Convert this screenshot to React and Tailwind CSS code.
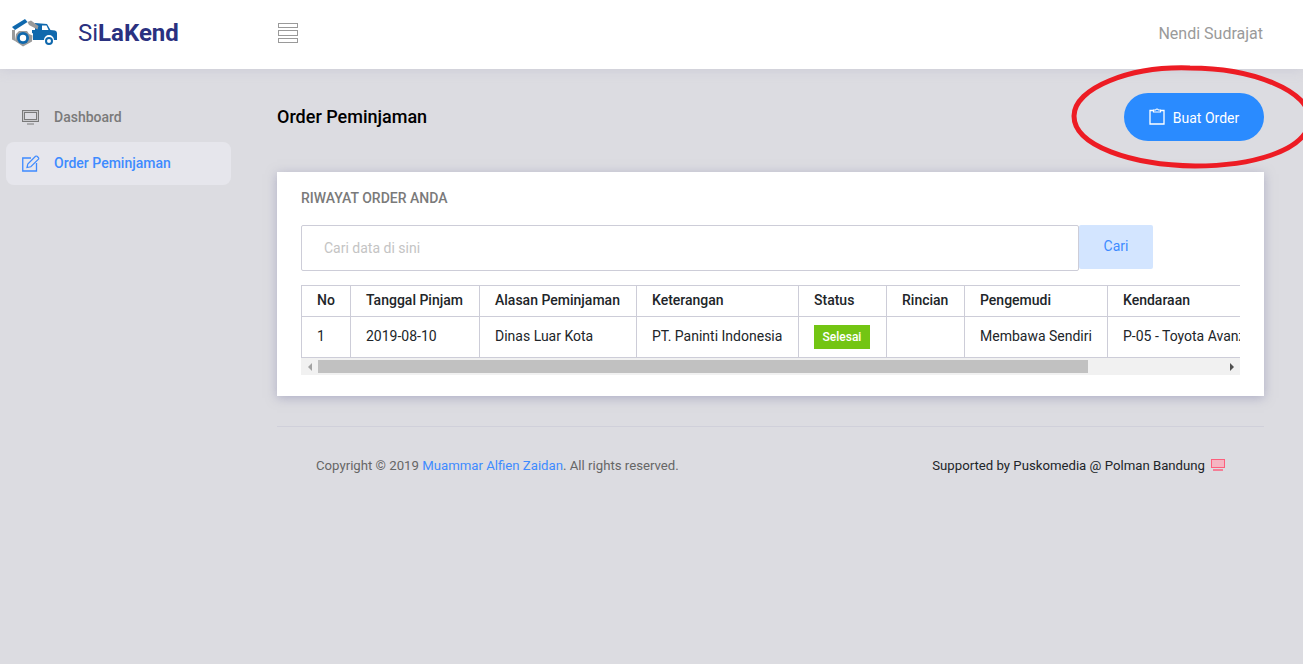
const columns = [
  { label: "No", width: "w-[49px]", value: "1" },
  { label: "Tanggal Pinjam", width: "w-[129px]", value: "2019-08-10" },
  { label: "Alasan Peminjaman", width: "w-[157px]", value: "Dinas Luar Kota" },
  { label: "Keterangan", width: "w-[162px]", value: "PT. Paninti Indonesia" },
  { label: "Status", width: "w-[88px]", badge: "Selesai" },
  { label: "Rincian", width: "w-[78px]", value: "" },
  { label: "Pengemudi", width: "w-[143px]", value: "Membawa Sendiri" },
  { label: "Kendaraan", width: "w-[180px]", value: "P-05 - Toyota Avanza" },
];

function Logo() {
  return (
    <svg width="46" height="28" viewBox="0 0 46 28" fill="none">
      {/* truck body */}
      <path d="M20 11 L23 11 L23 4 L35 5 L38.500 11 L43 11.500 Q45 12 45 14 L45 21 L42 21 A5 5 0 0 0 32 21 L20 21 Z" fill="#0f68ad" />
      <path d="M30 6.500 L34.500 6.500 L36.500 11 L30 11 Z" fill="#fff" />
      <circle cx="37" cy="22" r="3" fill="#fff" stroke="#0f68ad" strokeWidth="2" />
      {/* roof and wrench band */}
      <path d="M0 8 L13 0 L15.500 3 L3 11 Z" fill="#0f68ad" />
      <path d="M15.500 3 L19 1.500 L26.500 7 L25.500 10.500 L17 6 Z" fill="#9a9a9a" />
      {/* nut */}
      <path d="M11 9 L21 14.500 L21 23 L11 27.500 L3 23 L3 14 Z" fill="#fff" />
      <path d="M0 11 L3 11 L3 22 L0 20.500 Z" fill="#9a9a9a" />
      <path d="M3 22 L11 27.500 L20 22.500 L20.500 16.500 L17 15 L15 12 L7 12 L4 15 Z" fill="#9a9a9a" />
      <circle cx="11" cy="19" r="6" fill="#0f68ad" />
      <circle cx="11" cy="19" r="3.200" fill="#fff" />
    </svg>
  );
}

function MonitorIcon({ className }) {
  return (
    <svg width="18" height="15" viewBox="0 0 18 15" fill="none" className={className}>
      <rect x="0.500" y="0.500" width="16" height="11" fill="#8c8c8c" fillOpacity="0.25" stroke="currentColor" />
      <rect x="2.500" y="2.500" width="12" height="7" fill="#dcdce1" stroke="currentColor" />
      <path d="M5 14 H12" stroke="currentColor" />
    </svg>
  );
}

function EditIcon() {
  return (
    <svg width="18" height="17" viewBox="0 0 18 17" fill="none" className="text-[#3e8bff]">
      <path d="M9 3 H0.750 V16 H14.500 V8" stroke="currentColor" strokeWidth="1.300" />
      <path d="M5 12.500 L5.800 9 L13.500 1.300 Q14.300 0.700 15 1.300 L16.500 2.700 Q17 3.500 16.500 4.200 L8.800 11.800 Z" stroke="currentColor" strokeWidth="1.200" />
    </svg>
  );
}

function ClipboardIcon() {
  return (
    <svg width="16" height="17" viewBox="0 0 16 17" fill="none" className="text-white mb-[2px]">
      <path d="M4.500 2.500 H1 V16 H15 V2.500 H11.500" stroke="currentColor" strokeWidth="1.300" />
      <path d="M4.500 4 V2 H6.500 Q8 0 9.500 2 H11.500 V4 Z" stroke="currentColor" strokeWidth="1.200" />
    </svg>
  );
}

function ScreenIcon() {
  return (
    <svg width="15" height="13" viewBox="0 0 15 13" fill="none" className="text-[#fd5f7c] mb-[2px]">
      <rect x="0.500" y="0.500" width="13" height="8" fill="#f5b5c2" stroke="currentColor" />
      <path d="M2 11 H12" stroke="currentColor" strokeWidth="1.500" />
    </svg>
  );
}

function TableScrollbar() {
  return (
    <div className="flex h-[17px] bg-[#f1f1f1] items-center">
      <div className="w-[17px] flex justify-center">
        <div className="w-0 h-0 border-y-[4px] border-y-transparent border-r-[4px] border-r-[#a3a3a3]" />
      </div>
      <div className="w-[770px] h-[13px] bg-[#c1c1c1]" />
      <div className="flex-1" />
      <div className="w-[17px] flex justify-center">
        <div className="w-0 h-0 border-y-[4px] border-y-transparent border-l-[4px] border-l-[#505050]" />
      </div>
    </div>
  );
}

export default function App() {
  return (
    <div className="relative h-[664px] overflow-hidden bg-[#dcdce1] font-['Roboto',sans-serif] text-[14px] text-[#212529]">
      <header className="h-[69px] pb-[4px] bg-white flex items-center shadow-[0_2px_10px_rgba(180,180,200,0.35)] relative">
        <div className="w-[278px] flex items-center pl-[12px] shrink-0">
          <Logo />
          <span className="ml-[20px] text-[24px] text-[#2a3180] leading-none">
            Si<span className="font-bold">LaKend</span>
          </span>
        </div>
        <button className="flex flex-col gap-[2px]">
          <span className="block w-[20px] h-[5px] border border-[#9a9a9a]" />
          <span className="block w-[20px] h-[6px] border border-[#9a9a9a]" />
          <span className="block w-[20px] h-[5px] border border-[#9a9a9a]" />
        </button>
        <span className="ml-auto mr-[40px] mt-[2px] text-[16px] text-[#9a9a9a]">Nendi Sudrajat</span>
      </header>

      <div className="flex">
        <aside className="w-[277px] shrink-0 pt-[27px] pl-[6px]">
          <div className="w-[225px] h-[43px] flex items-center pl-[16px] gap-[14px] text-[#7a7a7a] font-medium">
            <MonitorIcon />
            Dashboard
          </div>
          <div className="mt-[3px] w-[225px] h-[43px] flex items-center pl-[16px] gap-[14px] rounded-[8px] bg-[#e6e6ec] text-[#3e8bff] font-medium">
            <EditIcon />
            Order Peminjaman
          </div>
        </aside>

        <main className="w-[987px]">
          <div className="h-[103px] pt-[24px] flex items-start justify-between">
            <h1 className="text-[18px] font-medium text-black h-[46px] flex items-center">Order Peminjaman</h1>
            <button className="w-[140px] h-[48px] rounded-full bg-[#2a8bff] text-white flex items-center justify-center gap-[8px]">
              <ClipboardIcon />
              <span className="pt-[2px]">Buat Order</span>
            </button>
          </div>

          <section className="h-[224px] bg-white shadow-[0_2px_10px_rgba(130,130,170,0.5)] px-[24px] pt-[18px]">
            <h2 className="text-[14px] font-medium text-[#7a7a7a] leading-[16px]">RIWAYAT ORDER ANDA</h2>
            <div className="mt-[19px] flex items-start">
              <input
                placeholder="Cari data di sini"
                className="w-[778px] h-[46px] border border-[#cdcdd8] rounded-[2px] pl-[22px] text-[14px] placeholder:text-[#c4c4c4] outline-none"
              />
              <button className="w-[74px] h-[44px] pb-[2px] rounded-[2px] bg-[#d3e5ff] text-[#3e8bff]">Cari</button>
            </div>
            <div className="mt-[14px] w-[939px] overflow-hidden">
              <table className="table-fixed w-[986px] border-collapse border border-[#cdcdd8]">
                <thead>
                  <tr className="h-[31px]">
                    {columns.map((c) => (
                      <th key={c.label} className={`${c.width} border border-[#cdcdd8] pl-[15px] pb-[2px] text-left font-medium text-[14px] text-[#212529]`}>
                        {c.label}
                      </th>
                    ))}
                  </tr>
                </thead>
                <tbody>
                  <tr className="h-[41px]">
                    {columns.map((c) => (
                      <td key={c.label} className={`border border-[#cdcdd8] pl-[15px] whitespace-nowrap overflow-hidden ${c.badge ? "" : "pb-[2px]"}`}>
                        {c.badge ? (
                          <span className="inline-flex items-center justify-center w-[56px] h-[24px] bg-[#73c513] text-white text-[12px] font-medium">
                            {c.badge}
                          </span>
                        ) : (
                          c.value
                        )}
                      </td>
                    ))}
                  </tr>
                </tbody>
              </table>
              <TableScrollbar />
            </div>
          </section>

          <footer className="mt-[30px] border-t border-[#d0d0da] pt-[31px] pl-[39px] pr-[38px] flex justify-between items-start text-[13.2px] leading-[16px]">
            <span className="text-[#666]">
              Copyright © 2019 <span className="text-[#3e8bff]">Muammar Alfien Zaidan</span>. All rights reserved.
            </span>
            <span className="flex items-center gap-[6px] text-[#212529]">
              Supported by Puskomedia @ Polman Bandung
              <ScreenIcon />
            </span>
          </footer>
        </main>
      </div>

      {/* red marker circle someone drew around the button */}
      <svg className="absolute left-[1060px] top-[60px] pointer-events-none" width="243" height="115" viewBox="0 0 243 115" fill="none">
        <path
          d="M130 8 C70 6 14 28 14 56 C14 86 72 105 135 106 C190 106 244 92 250 62 C252 30 190 8 130 8 Z"
          stroke="#ed1c24"
          strokeWidth="5"
        />
      </svg>
    </div>
  );
}
